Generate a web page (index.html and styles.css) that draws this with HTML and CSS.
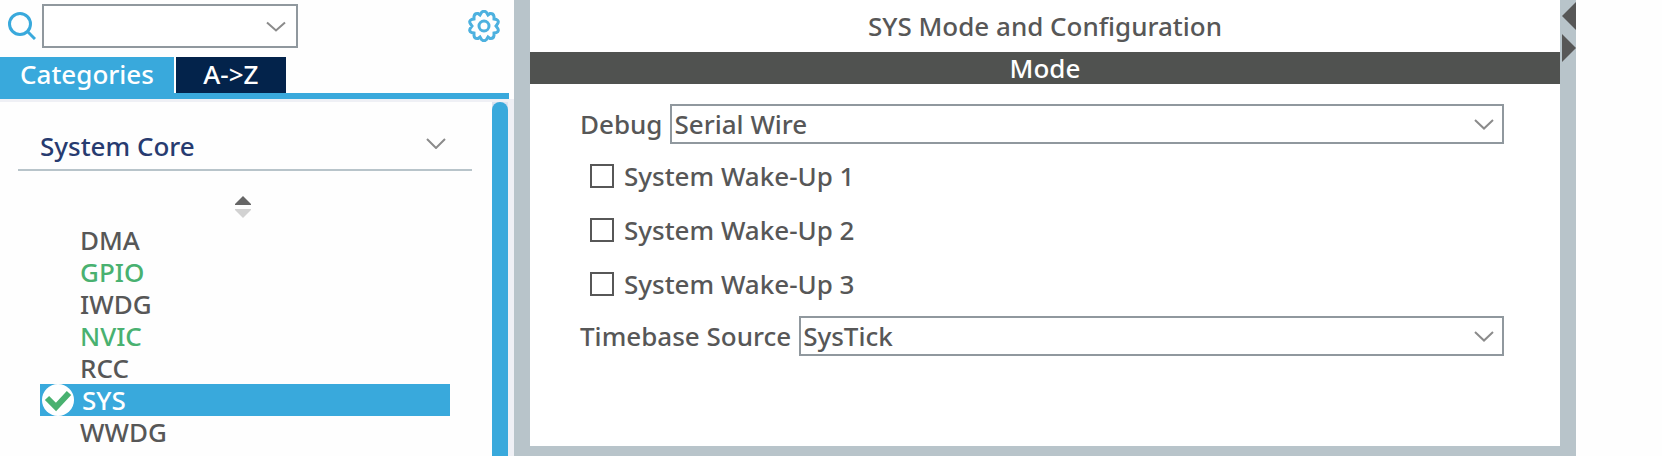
FILE: index.html
```html
<!DOCTYPE html>
<html lang="en">
<head>
<meta charset="utf-8">
<title>SYS Mode and Configuration</title>
<link rel="stylesheet" href="styles.css">
</head>
<body>
<div class="app">
  <aside class="sidebar">
    <div class="search">
      <svg class="search-icon" viewBox="0 0 28 28" aria-hidden="true"><circle cx="12" cy="12" r="10.5"/><path d="M19.5 19.5L27 27"/></svg>
      <div class="combo search-combo">
        <input class="field" type="text" aria-label="Search">
        <button class="combo-toggle" type="button" aria-label="Show suggestions"><svg class="chevron" viewBox="0 0 20 11" aria-hidden="true"><path d="M1 1.5L10 9.5L19 1.5"/></svg></button>
      </div>
      <button class="settings" type="button" aria-label="Settings">
        <svg class="gear" viewBox="0 0 32 32" aria-hidden="true"><path d="M13.500 2.500Q16 0 18.500 2.500L20 5L22 3.500Q25.500 3 26 6.500V9L28.500 9.500Q31.500 11 29.500 14L28 16L29.500 18Q31.500 21 28.500 22.500L26 23V25.500Q25.500 29 22 28.500L20 27L18.500 29.500Q16 32 13.500 29.500L12 27L10 28.500Q6.500 29 6 25.500V23L3.500 22.500Q0.500 21 2.500 18L4 16L2.500 14Q0.500 11 3.500 9.500L6 9V6.500Q6.500 3 10 3.500L12 5Z"/><circle cx="16" cy="16" r="5"/></svg>
      </button>
    </div>
    <nav class="tabs">
      <button class="tab tab-active" type="button">Categories</button>
      <button class="tab" type="button">A-&gt;Z</button>
    </nav>
    <div class="tree">
      <div class="tree-content">
        <button class="group" type="button" aria-expanded="true">System Core
          <svg class="chevron" viewBox="0 0 20 11" aria-hidden="true"><path d="M1 1L10 10L19 1"/></svg>
        </button>
        <button class="sort" type="button" aria-label="Sort">
          <svg class="sort-icon" viewBox="0 0 18 22" aria-hidden="true"><path class="sort-up" d="M9 0L17 8V9H1V8Z"/><path class="sort-down" d="M1 13H17V14L9 22L1 14Z"/></svg>
        </button>
        <ul class="list">
          <li class="item">DMA</li>
          <li class="item item-enabled">GPIO</li>
          <li class="item">IWDG</li>
          <li class="item item-enabled">NVIC</li>
          <li class="item">RCC</li>
          <li class="item item-selected"><svg class="tick" viewBox="0 0 32 32" aria-hidden="true"><circle cx="16" cy="16" r="16"/><path d="M5 14L14 23L27 9"/></svg>SYS</li>
          <li class="item">WWDG</li>
        </ul>
      </div>
      <div class="scrollbar"><div class="thumb"></div></div>
    </div>
  </aside>
  <main class="panel">
    <h1 class="title">SYS Mode and Configuration</h1>
    <h2 class="bar">Mode</h2>
    <form class="form">
      <div class="row">
        <label for="debug">Debug</label>
        <div class="combo">
          <select class="field" id="debug"><option>Serial Wire</option></select>
          <svg class="chevron" viewBox="0 0 20 11" aria-hidden="true"><path d="M1 1L10 9.500L19 1"/></svg>
        </div>
      </div>
      <div class="checks">
        <label class="check"><input class="box" type="checkbox">System Wake-Up 1</label>
        <label class="check"><input class="box" type="checkbox">System Wake-Up 2</label>
        <label class="check"><input class="box" type="checkbox">System Wake-Up 3</label>
      </div>
      <div class="row">
        <label for="timebase">Timebase Source</label>
        <div class="combo">
          <select class="field" id="timebase"><option>SysTick</option></select>
          <svg class="chevron" viewBox="0 0 20 11" aria-hidden="true"><path d="M1 1L10 9.500L19 1"/></svg>
        </div>
      </div>
    </form>
  </main>
  <div class="divider">
    <button class="collapse" type="button" aria-label="Collapse left"><svg viewBox="0 0 14 28" aria-hidden="true"><path d="M14 0V28L0 14Z"/></svg></button>
    <button class="collapse" type="button" aria-label="Collapse right"><svg viewBox="0 0 14 28" aria-hidden="true"><path d="M0 0V28L14 14Z"/></svg></button>
  </div>
</div>
</body>
</html>
```
FILE: styles.css
```css
* { box-sizing: border-box; }

body {
  margin: 0;
  background: #fefefe;
  color: #575757;
  font: 500 26px/32px "Noto Sans", "Open Sans", sans-serif;
}

button, input, select {
  margin: 0;
  padding: 0;
  border: 0;
  background: none;
  color: inherit;
  font: inherit;
}

svg { display: block; fill: none; }

.app {
  display: flex;
  min-height: 100vh;
  padding-right: 86px;
}

.sidebar {
  display: flex;
  flex-direction: column;
  flex: none;
  width: 514px;
}

.search {
  display: flex;
  align-items: center;
  height: 57px;
  padding: 0 14px 5px 8px;
}

.search-icon {
  width: 28px;
  height: 28px;
  margin-right: 6px;
  stroke: #39a9dc;
  stroke-width: 3;
}

.combo {
  position: relative;
  flex: 1;
  min-width: 0;
}

.search-combo { flex: 0 0 256px; }

.field {
  display: block;
  width: 100%;
  height: 40px;
  padding: 0 44px 0 2px;
  border: 2px solid #90989e;
  border-radius: 0;
  background: #fff;
  appearance: none;
}

.search-combo .field { height: 44px; }

.chevron {
  width: 20px;
  height: 11px;
  stroke: #8b8b8b;
  stroke-width: 2;
}

.combo > .chevron {
  position: absolute;
  top: 15px;
  right: 10px;
  pointer-events: none;
}

.combo-toggle {
  position: absolute;
  top: 17px;
  right: 12px;
}

.settings { margin-left: auto; }

.gear {
  width: 32px;
  height: 32px;
  stroke: #4db1df;
  stroke-width: 3;
}

.tabs {
  display: flex;
  gap: 2px;
  margin-right: 5px;
  border-bottom: 6px solid #39a9dc;
}

.tab {
  min-width: 110px;
  height: 36px;
  padding: 0 20px 2px;
  background: #03234b;
  color: #fff;
}

.tab-active { background: #39a9dc; }

.tree {
  display: flex;
  flex: 1;
  border-top: 3px solid #eff0f5;
  border-right: 6px solid #eff0f5;
}

.tree-content {
  flex: 1;
  padding: 25px 20px 8px 18px;
}

.group {
  display: flex;
  align-items: center;
  justify-content: space-between;
  width: 100%;
  height: 44px;
  padding: 0 26px 4px 22px;
  border-bottom: 2px solid #b8c4ca;
  color: #273b70;
}

.group .chevron { margin-bottom: 6px; }

.sort {
  display: block;
  margin: 25px auto 6px;
  padding-right: 4px;
}

.sort-icon { width: 18px; height: 22px; }
.sort-up { fill: #666; }
.sort-down { fill: #d2d2d2; }

.list {
  margin: 0 22px;
  padding: 0;
  list-style: none;
}

.item {
  height: 32px;
  padding-left: 40px;
}

.item-enabled { color: #49b170; }

.item-selected {
  display: flex;
  gap: 8px;
  padding-left: 2px;
  background: #39a9dc;
  color: #fff;
}

.tick { width: 32px; height: 32px; }
.tick circle { fill: #fff; }
.tick path { stroke: #49b170; stroke-width: 6; }

.scrollbar {
  display: flex;
  width: 16px;
  background: #dce3f0;
}

.thumb {
  flex: 1;
  border-radius: 8px 8px 0 0;
  background: #39a9dc;
}

.panel {
  flex: 1;
  min-width: 0;
  border: solid #b8c4ca;
  border-width: 0 0 10px 16px;
  background: #fff;
}

.title, .bar {
  margin: 0;
  font-size: 26px;
  font-weight: 500;
  text-align: center;
}

.title { padding: 10px 0; }

.bar {
  background: #505250;
  color: #fff;
}

.form { padding: 20px 56px 20px 50px; }

.row {
  display: flex;
  align-items: center;
  gap: 8px;
}

.checks {
  display: flex;
  flex-direction: column;
  gap: 22px;
  padding: 16px 10px;
}

.check {
  display: flex;
  align-items: center;
  gap: 10px;
}

.box {
  width: 24px;
  height: 24px;
  border: 2px solid #575757;
  appearance: none;
}

.box:checked { background: #39a9dc; }

.divider {
  width: 16px;
  padding: 2px 0 0 2px;
  background: #b8c4ca;
}

.collapse {
  display: block;
  margin-bottom: 4px;
}

.collapse svg {
  width: 14px;
  height: 28px;
  fill: #575757;
}
```
